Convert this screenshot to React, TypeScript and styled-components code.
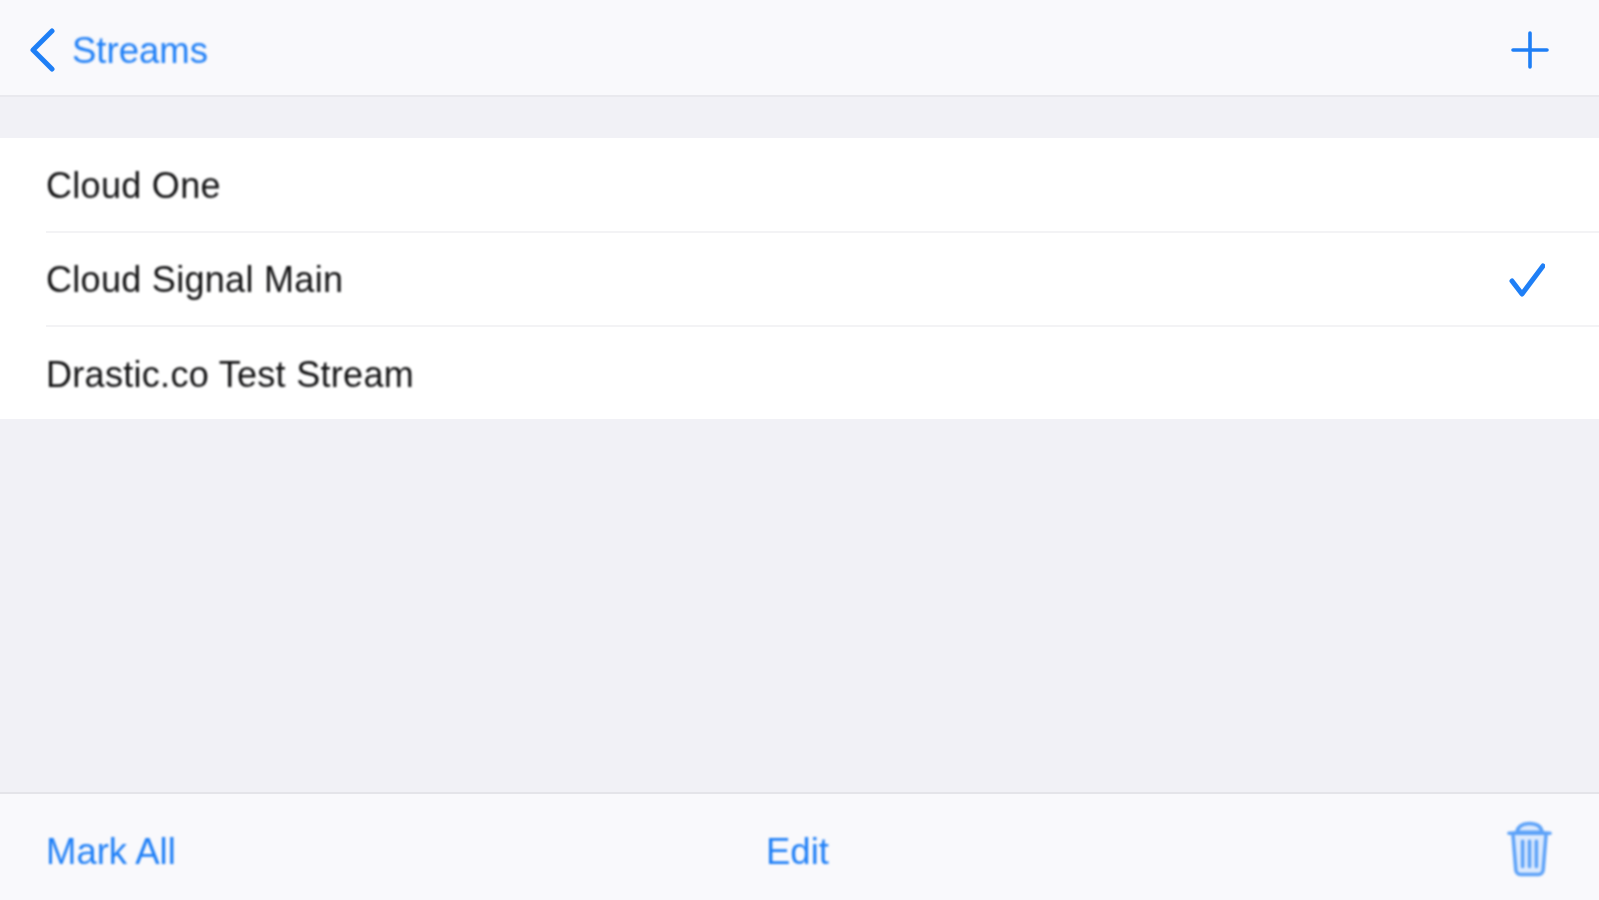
import React from 'react';
import styled, { createGlobalStyle } from 'styled-components';

const GlobalStyle = createGlobalStyle`
  html, body {
    margin: 0;
    padding: 0;
    background: #f1f1f6;
  }
  * {
    box-sizing: border-box;
  }
`;

const blue = '#1f7ff6';

const Screen = styled.div`
  width: 100%;
  height: 900px;
  display: flex;
  flex-direction: column;
  background: #f1f1f6;
  font-family: "Liberation Sans", Arial, sans-serif;
  overflow: hidden;
`;

const NavBar = styled.header`
  height: 97px;
  flex: none;
  display: flex;
  align-items: center;
  justify-content: space-between;
  padding: 5px 50px 0 29px;
  background: #f9f9fc;
  border-bottom: 2px solid #e9e9ee;
`;

const BackLink = styled.div`
  display: flex;
  align-items: center;
  gap: 17px;
`;

const Label = styled.span`
  color: ${blue};
  font-size: 36.5px;
  line-height: 40px;
  padding-top: 2px;
  filter: blur(0.9px);
`;

const Icon = styled.svg<{ $soft?: boolean }>`
  display: block;
  fill: ${(p) => (p.$soft ? '#dbe9fd' : 'none')};
  stroke: ${(p) => (p.$soft ? '#5da2f8' : blue)};
  stroke-linecap: round;
  stroke-linejoin: round;
  filter: blur(${(p) => (p.$soft ? '0.9px' : '0.6px')});
`;

const List = styled.ul`
  list-style: none;
  margin: 41px 0 0;
  padding: 0;
  background: #fff;
`;

const Row = styled.li`
  height: 94.5px;
  display: flex;
  align-items: center;
  justify-content: space-between;
  margin-left: 46px;
  padding: 3px 54px 0 0;
  border-bottom: 2px solid #f3f3f5;

  &:last-child {
    height: 92px;
    border-bottom: none;
  }
`;

const RowTitle = styled.span`
  color: #111112;
  font-size: 36px;
  letter-spacing: 0.3px;
  line-height: 40px;
  filter: blur(0.9px);
`;

const Spacer = styled.div`
  flex: 1;
`;

const ToolBar = styled.footer`
  height: 108px;
  flex: none;
  display: grid;
  grid-template-columns: 720px auto 1fr;
  align-items: center;
  padding: 8px 47px 0 46px;
  background: #f9f9fc;
  border-top: 2px solid #e4e4e9;
`;

const TrashSlot = styled.div`
  justify-self: end;
  margin-bottom: 4px;
`;

const streams = [
  { id: 1, name: 'Cloud One', active: false },
  { id: 2, name: 'Cloud Signal Main', active: true },
  { id: 3, name: 'Drastic.co Test Stream', active: false },
];

const App = () => {
  return (
    <Screen>
      <GlobalStyle />
      <NavBar>
        <BackLink>
          <Icon width="26" height="44" viewBox="0 0 26 44" strokeWidth="5">
            <path d="M23 3 L4 22 L23 41" />
          </Icon>
          <Label>Streams</Label>
        </BackLink>
        <Icon width="38" height="38" viewBox="0 0 38 38" strokeWidth="3.6">
          <path d="M19 2 V36 M2 19 H36" />
        </Icon>
      </NavBar>
      <List>
        {streams.map((item) => (
          <Row key={item.id}>
            <RowTitle>{item.name}</RowTitle>
            {item.active && (
              <Icon width="36" height="36" viewBox="0 0 36 36" strokeWidth="5">
                <path d="M3 19 L13 32 L34 4" />
              </Icon>
            )}
          </Row>
        ))}
      </List>
      <Spacer />
      <ToolBar>
        <Label>Mark All</Label>
        <Label>Edit</Label>
        <TrashSlot>
          <Icon $soft width="45" height="56" viewBox="0 0 46 56" strokeWidth="3.6">
            <path d="M10 11 C11 5 16 2 23 2 C30 2 35 5 36 11 Z" />
            <path d="M6 12 L9 49 C9 52 11 54 14 54 H32 C35 54 37 52 37 49 L40 12 Z" />
            <path d="M2 12 H44" />
            <path d="M16 20 V46 M23 20 V46 M30 20 V46" />
          </Icon>
        </TrashSlot>
      </ToolBar>
    </Screen>
  );
};

export default App;
